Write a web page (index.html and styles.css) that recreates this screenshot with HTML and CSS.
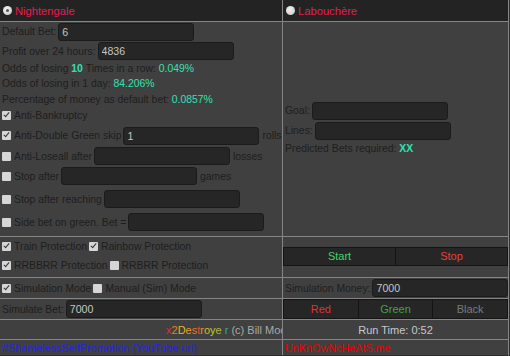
FILE: index.html
```html
<!DOCTYPE html>
<html lang="en">
<head>
  <meta charset="UTF-8">
  <title>x2Destroyer</title>
  <link rel="stylesheet" href="styles.css">
</head>
<body>
  <div class="app">
    <!-- header -->
    <div class="cell head">
      <span class="radio on"></span><span class="title">Nightengale</span>
    </div>
    <div class="cell head">
      <span class="radio"></span><span class="title">Labouchère</span>
    </div>

    <!-- settings -->
    <div class="cell left-body">
      <div class="row r-in">Default Bet: <input class="field" value="6"></div>
      <div class="row r-in2">Profit over 24 hours: <input class="field" value="4836"></div>
      <div class="row r-txt">Odds of losing&nbsp;<b class="hl">10</b>&nbsp;Times in a row:&nbsp;<span class="hl">0.049%</span></div>
      <div class="row r-txt">Odds of losing in 1 day:&nbsp;<span class="hl">84.206%</span></div>
      <div class="row r-txt2">Percentage of money as default bet:&nbsp;<span class="hl">0.0857%</span></div>
      <div class="row r-txt2"><span class="cb on"></span>Anti-Bankruptcy</div>
      <div class="row r-opt first"><span class="cb on"></span>Anti-Double Green skip <input class="field" value="1"> <span class="unit">rolls</span></div>
      <div class="row r-opt"><span class="cb"></span>Anti-Loseall after <input class="field"> <span class="unit">losses</span></div>
      <div class="row r-opt"><span class="cb"></span>Stop after <input class="field"> <span class="unit">games</span></div>
      <div class="row r-opt gap"><span class="cb"></span>Stop after reaching <input class="field"></div>
      <div class="row r-opt gap"><span class="cb"></span>Side bet on green. Bet = <input class="field"></div>
    </div>
    <div class="cell right-body">
      <div class="row r-goal">Goal: <input class="field"></div>
      <div class="row r-goal">Lines: <input class="field"></div>
      <div class="row r-txt">Predicted Bets required:&nbsp;<b class="hl">XX</b></div>
    </div>

    <!-- protections -->
    <div class="cell prot">
      <div class="row r-prot"><span class="cb on"></span>Train Protection <span class="cb on"></span>Rainbow Protection</div>
      <div class="row r-prot"><span class="cb on"></span>RRBBRR Protection <span class="cb"></span>RRBRR Protection</div>
    </div>
    <div class="cell controls">
      <div class="btn-group">
        <button class="btn start">Start</button>
        <button class="btn stop">Stop</button>
      </div>
    </div>

    <!-- simulation -->
    <div class="cell line"><span class="cb on"></span>Simulation Mode <span class="cb"></span>Manual (Sim) Mode</div>
    <div class="cell line">Simulation Money: <input class="field" value="7000"></div>

    <div class="cell line">Simulate Bet: <input class="field" value="7000"></div>
    <div class="cell colors">
      <button class="btn red">Red</button>
      <button class="btn green">Green</button>
      <button class="btn black">Black</button>
    </div>

    <!-- credits -->
    <div class="cell credit">
      <span class="rainbow"><span class="c1">x</span><span class="c2">2</span><span class="c3">D</span><span class="c4">e</span><span class="c5">s</span><span class="c6">t</span><span class="c7">r</span><span class="c8">o</span><span class="c9">y</span><span class="c10">e</span> <span class="c11">r</span></span> (c) Bill Moody
    </div>
    <div class="cell runtime">Run Time: 0:52</div>

    <div class="cell foot"><span class="promo">#ShamelessSelfPromotion (YouTube url)</span></div>
    <div class="cell foot"><span class="site">UnKnOwNcHeAtS.me</span></div>
  </div>
</body>
</html>
```

FILE: styles.css
```css
html, body {
  margin: 0;
  padding: 0;
  background-color: #303030;
  font-family: "Liberation Sans", Arial, sans-serif;
  font-size: 10.4px;
  color: #1e1e1e;
  overflow: hidden;
}

.app {
  display: grid;
  grid-template-columns: 282px 225px;
  grid-template-rows: 21px 214px 40px 20px 20px 19px 15px;
  gap: 1px;
  width: 508px;
  background-color: #858585;
  border-right: 1px solid #858585;
  border-bottom: 1px solid #2c2c2c;
}

.cell {
  background-color: #404040;
  overflow: hidden;
  white-space: nowrap;
}

.head {
  background-color: #232323;
  display: flex;
  align-items: center;
  padding-left: 3px;
}

.title {
  color: #ea1a4e;
  font-size: 11.2px;
  margin-left: 3px;
}

.radio {
  width: 9px;
  height: 9px;
  border-radius: 50%;
  background: radial-gradient(circle at 40% 35%, #f2f2f2, #c4c4c4);
  display: inline-flex;
  align-items: center;
  justify-content: center;
}

.radio.on::after {
  content: "";
  width: 3px;
  height: 3px;
  border-radius: 50%;
  background-color: #555;
}

.row {
  display: flex;
  align-items: center;
}

.left-body {
  padding-left: 2px;
}

.r-in { height: 19px; }
.r-in2 { height: 20px; }
.r-txt { height: 15px; }
.r-txt2 { height: 16px; }
.r-opt { height: 20px; }
.r-opt.first { margin-top: 2px; height: 21px; }
.r-opt.gap { margin-top: 3px; }

.hl {
  color: #2fe2b2;
}

b.hl {
  font-weight: bold;
}

.field {
  width: 136px;
  height: 18px;
  box-sizing: border-box;
  margin: 0 0 0 2px;
  padding: 0 3px;
  background-color: #262626;
  border: 1px solid #1b1b1b;
  border-radius: 3px;
  color: #c4c4c4;
  font-family: inherit;
  font-size: 10.6px;
  outline: none;
}

.unit {
  margin-left: 3px;
}

.cb {
  width: 9px;
  height: 9px;
  margin-right: 3px;
  border-radius: 1px;
  background-color: #d6d6d6;
  flex: none;
  display: inline-block;
  position: relative;
}

.cb.on::after {
  content: "";
  position: absolute;
  left: 3px;
  top: 0px;
  width: 2px;
  height: 5px;
  border: solid #333;
  border-width: 0 1.5px 1.5px 0;
  transform: rotate(40deg);
}

.line .cb:not(:first-child) {
  margin-left: 2px;
}

.right-body {
  display: flex;
  flex-direction: column;
  justify-content: center;
  padding-left: 2px;
  padding-bottom: 2px;
}

.r-goal {
  height: 20px;
}

.prot {
  padding-left: 2px;
}

.r-prot {
  height: 19px;
}

.r-prot .cb:not(:first-child) {
  margin-left: 2px;
}

.controls {
  display: flex;
  align-items: center;
  padding-bottom: 2px;
}

.btn-group {
  display: flex;
  width: 100%;
}

.btn {
  flex: 1;
  height: 19px;
  margin: 0;
  padding: 0;
  background-color: #262626;
  border: 1px solid #141414;
  font-family: inherit;
  font-size: 11px;
}

.btn + .btn {
  border-left: none;
}

.start { color: #3dd66b; }
.stop { color: #e8403a; }
.red { color: #df3434; }
.green { color: #3ea43e; }
.black { color: #7a7a7a; }

.line {
  display: flex;
  align-items: center;
  padding-left: 2px;
}

.colors {
  display: flex;
}

.colors .btn {
  height: 20px;
}

.credit {
  display: flex;
  align-items: center;
  padding-left: 166px;
  color: #a8a8a8;
  font-size: 11px;
}

.rainbow {
  margin-right: 3px;
}

.c1 { color: #d8323e; }
.c2 { color: #e2841e; }
.c3 { color: #e5b41c; }
.c4 { color: #e59a24; }
.c5 { color: #e0782a; }
.c6 { color: #d85a30; }
.c7 { color: #e39028; }
.c8 { color: #d6b82a; }
.c9 { color: #c9c230; }
.c10 { color: #b4b836; }
.c11 { color: #2fa890; }

.runtime {
  display: flex;
  align-items: center;
  justify-content: center;
  color: #c8c8c8;
  font-size: 11px;
}

.foot {
  display: flex;
  align-items: center;
  padding-left: 2px;
  font-size: 10.8px;
}

.promo {
  color: #2424e0;
}

.site {
  color: #e40000;
}
```
